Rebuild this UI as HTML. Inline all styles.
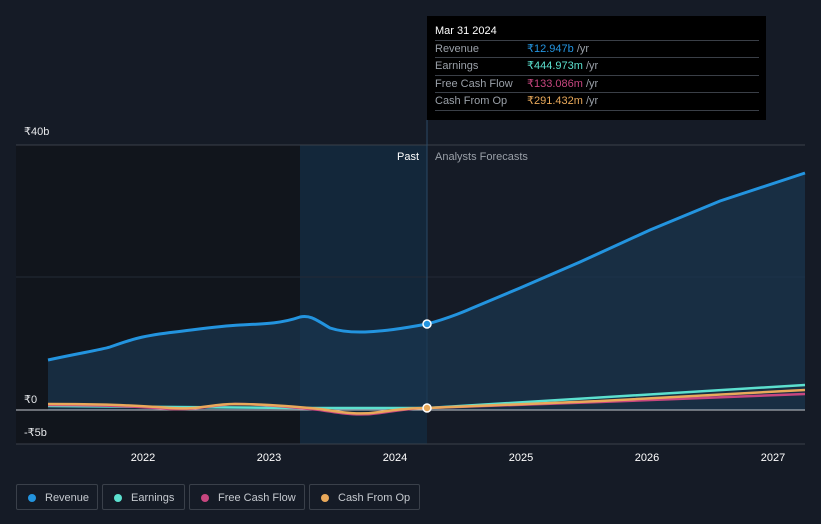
<!DOCTYPE html>
<html><head><meta charset="utf-8"><style>
body{margin:0;background:#151b26;width:821px;height:524px;overflow:hidden;font-family:"Liberation Sans",sans-serif;}
svg{position:absolute;left:0;top:0}
.tip{position:absolute;left:427px;top:16px;width:339px;height:104px;background:#000;}
.tip .d{position:absolute;left:8px;top:9px;color:#fff;font-size:11px;}
.row{position:absolute;left:8px;width:324px;height:17px;border-top:1px solid #3a3f47;font-size:11px;color:#9aa0a8;line-height:17px}
.row span{position:absolute;left:92px}
.leg{position:absolute;top:484px;height:26px;border:1px solid #3a404a;border-radius:2px;color:#c5c9cf;font-size:11px;line-height:26px;box-sizing:border-box}
.leg i{position:absolute;left:11px;top:9px;width:8px;height:8px;border-radius:50%}
.leg b{font-weight:normal;position:absolute;left:28px}
</style></head><body>
<svg width="821" height="524">
<rect x="16" y="145" width="284" height="299" fill="#11151c"/>
<rect x="300" y="145" width="127" height="299" fill="#13273a"/>
<line x1="16" y1="145" x2="805" y2="145" stroke="#3a404a"/>
<line x1="16" y1="277" x2="805" y2="277" stroke="#232a36"/>
<line x1="16" y1="444" x2="805" y2="444" stroke="#3a404a"/>
<line x1="427" y1="120" x2="427" y2="410" stroke="#2a4a66"/>
<path d="M48,360 C80,353 100,350 110,347 C130,340 140,336 175,332 C200,329 220,326 240,325 C260,324 280,324 300,317 C310,315 315,319 330,328 C345,333 360,332 365,332 C385,331 400,329 427,324 C450,318 470,309 470,309 L520,288 L580,262 L650,230 L720,201 L805,173 L805,410 L48,410Z" fill="#1a3650" opacity="0.7"/>
<path d="M48,360 C80,353 100,350 110,347 C130,340 140,336 175,332 C200,329 220,326 240,325 C260,324 280,324 300,317 C310,315 315,319 330,328 C345,333 360,332 365,332 C385,331 400,329 427,324 C450,318 470,309 470,309 L520,288 L580,262 L650,230 L720,201 L805,173" fill="none" stroke="#2394df" stroke-width="3"/>
<line x1="16" y1="410" x2="805" y2="410" stroke="#c5c9cf" stroke-width="1"/>
<path d="M48,406 L300,408 L427,408 L805,385" fill="none" stroke="#5ce0cf" stroke-width="2.5"/>
<path d="M48,405 C100,405 130,406 170,409 C200,410 210,405 235,404 C260,404 290,407 320,410 C345,414 360,416 380,413 C400,410 415,408 427,408 L600,402 L805,394" fill="none" stroke="#c7467f" stroke-width="2.5"/>
<path d="M48,404 C100,404 130,405 170,408 C200,410 210,404 235,404 C260,404 290,406 320,409 C345,413 360,415 380,412 C400,409 415,408 427,408 L600,401 L805,390" fill="none" stroke="#e9a95a" stroke-width="2.5"/>
<circle cx="427" cy="324" r="4" fill="#2394df" stroke="#fff" stroke-width="1.5"/>
<circle cx="427" cy="408" r="4" fill="#e9a95a" stroke="#fff" stroke-width="1.5"/>
<g fill="#fff" font-size="11" text-anchor="middle">
<text x="143" y="461">2022</text><text x="269" y="461">2023</text><text x="395" y="461">2024</text><text x="521" y="461">2025</text><text x="647" y="461">2026</text><text x="773" y="461">2027</text>
</g>
<g fill="#e6e8eb" font-size="11"><text x="24" y="135">₹40b</text><text x="24" y="403">₹0</text><text x="24" y="436">-₹5b</text>
<text x="419" y="160" text-anchor="end" fill="#fff">Past</text><text x="435" y="160" fill="#9aa0a8">Analysts Forecasts</text></g>
</svg>
<div class="tip"><div class="d">Mar 31 2024</div>
<div class="row" style="top:24px">Revenue<span><font color="#2394df">₹12.947b</font> /yr</span></div>
<div class="row" style="top:41px">Earnings<span><font color="#5ce0cf">₹444.973m</font> /yr</span></div>
<div class="row" style="top:59px">Free Cash Flow<span><font color="#c7467f">₹133.086m</font> /yr</span></div>
<div class="row" style="top:76px;border-bottom:1px solid #3a3f47">Cash From Op<span><font color="#e9a95a">₹291.432m</font> /yr</span></div>
</div>
<div class="leg" style="left:16px;width:82px"><i style="background:#2394df"></i><b>Revenue</b></div>
<div class="leg" style="left:102px;width:83px"><i style="background:#5ce0cf"></i><b>Earnings</b></div>
<div class="leg" style="left:189px;width:116px"><i style="background:#c7467f"></i><b>Free Cash Flow</b></div>
<div class="leg" style="left:309px;width:111px"><i style="background:#e9a95a"></i><b>Cash From Op</b></div>
</body></html>
